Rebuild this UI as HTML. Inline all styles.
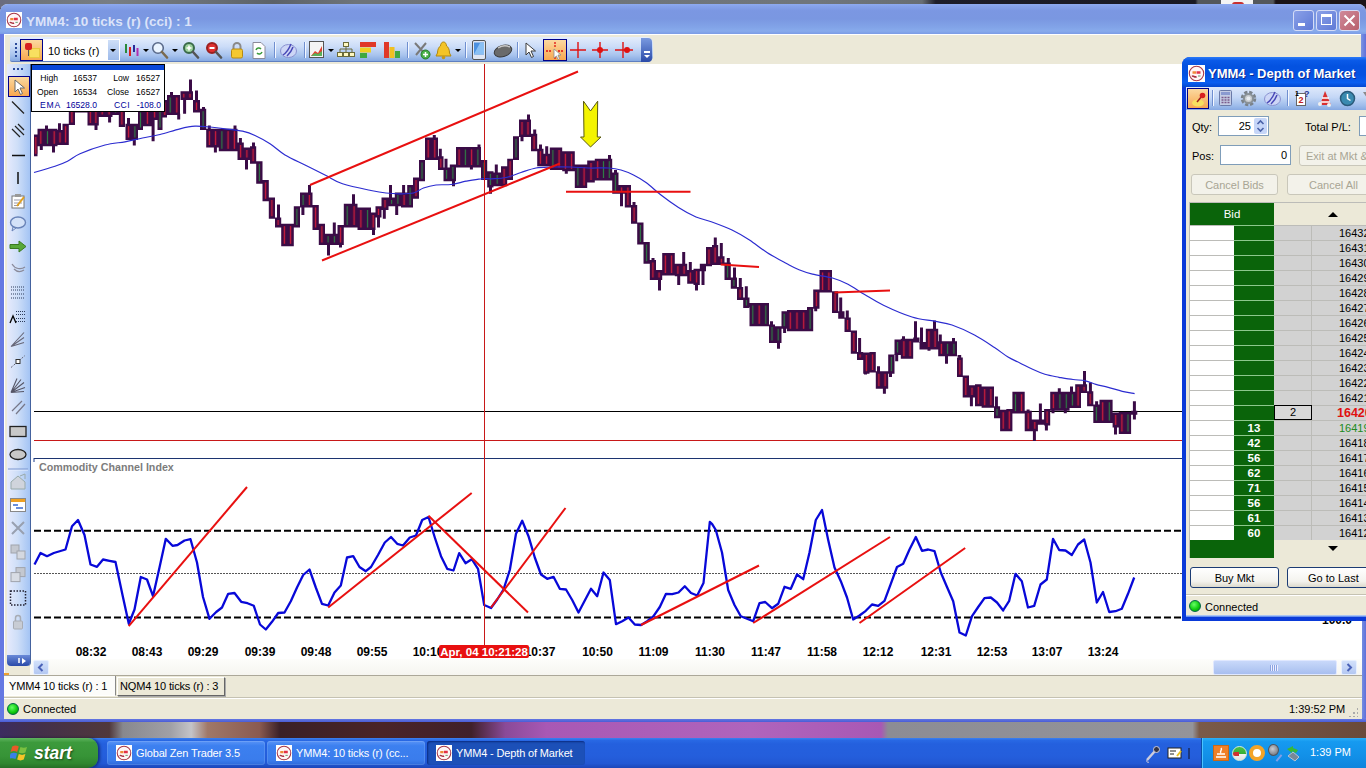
<!DOCTYPE html>
<html><head><meta charset="utf-8"><title>YMM4: 10 ticks (r) (cci) : 1</title>
<style>
*{box-sizing:border-box;margin:0;padding:0}
html,body{width:1366px;height:768px;overflow:hidden;background:#2a2230;font-family:"Liberation Sans",sans-serif;font-size:11px;color:#000}
.abs{position:absolute}
#desk-top{left:0;top:0;width:1366px;height:8px;background:linear-gradient(90deg,#6a6c80 0,#70767c 3%,#787e84 8%,#6c7278 14%,#5c6268 20%,#6e747a 26%,#70767c 60%,#686e74 67.5%,#1e1e2a 68.5%,#1a1a24 87.5%,#54585c 87.7%,#54585c 93.2%,#1a1418 93.4%,#1a1418 100%)}
#desk-bot{left:0;top:718px;width:1366px;height:22px;background:linear-gradient(90deg,#3c2c60 0,#44304a 3%,#50383c 8%,#88888e 9%,#a0a0a6 12.5%,#c4c4c8 14%,#a07868 15.2%,#8a5a50 19%,#3a2028 20.5%,#4a2428 28%,#40202a 34.5%,#8a4a98 37%,#a858b4 40%,#b064bc 55%,#a858b4 64.5%,#8c8c94 65%,#94949a 87.3%,#7a5a48 87.8%,#6a4a3a 100%)}
/* main window */
#win{left:0;top:4px;width:1366px;height:718px;background:#ece9d8;border-radius:8px 8px 0 0;overflow:hidden}
#title{left:0;top:0;width:1366px;height:30px;background:linear-gradient(180deg,#8eaaf0 0,#86a2ea 8%,#7b97e2 22%,#7a97e1 50%,#82a4e8 78%,#88abec 90%,#7c9ce6 100%)}
#title .txt{left:26px;top:10px;font:bold 13.5px "Liberation Sans",sans-serif;color:#dbe3f9;white-space:nowrap}
.wb{position:absolute;top:6px;width:21px;height:21px;border:1px solid #d5dcf6;border-radius:3px;background:linear-gradient(135deg,#8aa0e8,#5f7ad6)}
#bl{left:0;top:30px;width:4px;height:688px;background:#6578e2}
#br{left:1361px;top:30px;width:5px;height:688px;background:linear-gradient(90deg,#7b95e2,#5f70da)}
#bb{left:0;top:714px;width:1366px;height:4px;background:linear-gradient(180deg,#6c80e4,#4a5cd6)}
#tb{left:10px;top:33px;width:643px;height:25px;border-radius:2px 6px 6px 2px;background:linear-gradient(180deg,#e4edfc 0,#cbdcf8 40%,#a9c4ee 75%,#86a9e2 100%);border-bottom:1px solid #5f7fc0}
.sep{position:absolute;top:4px;width:1px;height:16px;background:#6f8fd0;box-shadow:1px 0 0 #f4f8ff}
.dd{position:absolute;top:11px;width:0;height:0;border-left:3px solid transparent;border-right:3px solid transparent;border-top:3px solid #000}
#ls{z-index:2;left:7px;top:60px;width:24px;height:602px;background:linear-gradient(90deg,#e6eafc 0,#cfdff8 45%,#a4c4f4 100%);border-right:1px solid #44629e;border-radius:0 0 4px 4px}
.sel{position:absolute;border:1px solid #00008a;background:linear-gradient(180deg,#fbd9a0,#f8a850)}
#hs{left:30px;top:654px;width:1332px;height:17px;background:linear-gradient(180deg,#fdfdfb,#f6f5f0);border-top:1px solid #fff}
#tabs{left:4px;top:671px;width:1358px;height:22px;background:#ece9d8;border-top:1px solid #aca899}
#status{left:4px;top:693px;width:1358px;height:22px;background:#ece9d8;border-top:1px solid #c5c2b2;box-shadow:inset 0 1px 0 #fff}
.dot{position:absolute;width:12px;height:12px;border-radius:50%;background:radial-gradient(circle at 40% 35%,#6f6 0,#1c1 55%,#080 100%);border:1px solid #064}
/* DOM window */
#dom{left:1182px;top:57px;width:190px;height:564px;background:#0a3ad8;border-radius:8px 0 0 0;overflow:hidden}
#dtitle{left:0;top:0;width:190px;height:30px;background:linear-gradient(180deg,#2a7af8 0,#0a5ae8 12%,#0452e0 30%,#0452e2 60%,#0a5ef0 85%,#0448d0 100%)}
#dbody{left:4px;top:30px;width:186px;height:528px;background:#ece9d8;overflow:hidden}
#dtb{left:0;top:0;width:186px;height:23px;background:linear-gradient(180deg,#dfe9fb 0,#c4d7f6 45%,#9fbdeb 80%,#86a9e2 100%)}
.inp{position:absolute;background:#fff;border:1px solid #7f9db9;font-size:11px;text-align:right}
.btn{position:absolute;border:1px solid #c9c7ba;border-radius:3px;background:#f3f2ea;color:#a8a594;text-align:center;font-size:11px;white-space:nowrap;overflow:hidden}
.btn2{position:absolute;border:1px solid #1c3c74;border-radius:3px;background:linear-gradient(180deg,#fff 0,#f4f3ee 70%,#dcd9cc 100%);color:#000;text-align:center;font-size:11px;white-space:nowrap}
/* taskbar */
#task{left:0;top:738px;width:1366px;height:30px;background:linear-gradient(180deg,#3a80f0 0,#2868e4 8%,#2460de 20%,#245edc 60%,#2258d4 85%,#1c46b8 100%)}
#start{left:0;top:0;width:98px;height:30px;border-radius:0 10px 10px 0;background:linear-gradient(180deg,#5eb45e 0,#3c9a3c 15%,#379437 60%,#2f862f 85%,#266f26 100%);box-shadow:2px 0 3px rgba(0,0,40,.5)}
#start span{position:absolute;left:34px;top:5px;font:italic bold 17.5px "Liberation Sans",sans-serif;color:#fff;text-shadow:1px 1px 2px #1a4a1a}
.tbtn{position:absolute;top:3px;height:24px;border-radius:3px;background:linear-gradient(180deg,#5a94f6 0,#3c80f0 20%,#3a7cec 80%,#2e6ada 100%);color:#fff;font-size:11px;letter-spacing:-0.15px;white-space:nowrap;overflow:hidden;box-shadow:inset 0 0 0 1px rgba(255,255,255,.12)}
.tbtn span{position:absolute;left:29px;top:6px}
.tbtn.act{background:#1c50b8;box-shadow:inset 1px 1px 2px #0a2a80}
#tray{left:1201px;top:0;width:165px;height:30px;background:linear-gradient(180deg,#2ab0f8 0,#169af0 12%,#1290e8 60%,#0f84dc 100%);border-left:1px solid #0a50a8;box-shadow:inset 1px 0 0 #4ac4ff}
.ico{position:absolute;width:16px;height:16px;border-radius:50%;background:#fff;border:1.5px solid #c83030}
</style></head><body>
<div class="abs" id="desk-top"><div class="abs" style="left:1221px;top:0;width:32px;height:5px;background:#f4f4f4"></div><div class="abs" style="left:1232px;top:2px;width:12px;height:3px;background:#c83030;border-radius:6px 6px 0 0"></div></div>
<div class="abs" id="desk-bot"></div>
<div class="abs" id="win">
 <div class="abs" id="title">
  <svg class="abs" style="left:6px;top:8px" width="16" height="16" viewBox="0 0 17 17"><rect width="17" height="17" fill="#fff"/><circle cx="8.5" cy="8.5" r="7.2" fill="#fff6f6" stroke="#a83848" stroke-width="1.1"/><path d="M4.5 7.500h3.500" stroke="#f08838" stroke-width="2.400"/><path d="M8.500 7.500h4" stroke="#e23048" stroke-width="2.600"/><path d="M4 11.500c1.500-1.500 2.500 1.500 4.500 0" stroke="#a83040" stroke-width="1.600" fill="none"/><path d="M10 11h2.500" stroke="#5a9a6a" stroke-width="1"/></svg>
  <div class="abs txt">YMM4: 10 ticks (r) (cci) : 1</div>
  <div class="wb" style="left:1293px"><div class="abs" style="left:4px;top:12px;width:7px;height:3px;background:#fff"></div></div>
  <div class="wb" style="left:1316px"><div class="abs" style="left:4px;top:3px;width:11px;height:11px;border:1px solid #fff;border-top-width:3px"></div></div>
  <div class="wb" style="left:1339px;background:linear-gradient(135deg,#d08a9a,#b8606c)"><svg class="abs" style="left:3px;top:3px" width="13" height="13"><path d="M1.5 1.5L11.5 11.5M11.5 1.5L1.5 11.5" stroke="#fff" stroke-width="2"/></svg></div>
 </div>
 <div class="abs" style="left:4px;top:30px;width:1357px;height:1px;background:#fff"></div>
 <div class="abs" style="left:4px;top:30px;width:1px;height:684px;background:#fff"></div>
 <div class="abs" id="bl"></div><div class="abs" id="br"></div><div class="abs" id="bb"></div>
 <!-- toolbar -->
 <div class="abs" id="tb"><div class="abs" style="left:0;top:1px;width:643px;height:24px">
  <div class="abs" style="left:5px;top:5px;width:2px;height:14px;background:repeating-linear-gradient(180deg,#2a4a9a 0,#2a4a9a 2px,transparent 2px,transparent 4px)"></div>
  <div class="sel" style="left:10px;top:1px;width:23px;height:22px"><div class="abs" style="left:8px;top:8px;width:11px;height:10px;background:#f8e060;border:1px solid #e8c840"></div><div class="abs" style="left:4px;top:3px;width:7px;height:7px;background:#d82020;border-radius:2px"></div><div class="abs" style="left:7px;top:10px;width:1px;height:6px;background:#555"></div></div>
  <div class="abs" style="left:33px;top:1px;width:77px;height:22px;background:#fff"></div>
  <div class="abs" style="left:38px;top:7px;font-size:11px;white-space:nowrap">10 ticks (r)</div>
  <div class="abs" style="left:98px;top:2px;width:11px;height:20px;background:linear-gradient(180deg,#cfdff8,#9dbaea)"></div><div class="dd" style="left:100px"></div>
  <!-- candle icon -->
  <svg class="abs" style="left:114px;top:4px" width="16" height="16"><path d="M2 2v9" stroke="#2a8a3a" stroke-width="2"/><path d="M6 5v9" stroke="#d82020" stroke-width="2"/><path d="M10 3v7" stroke="#2a2a9a" stroke-width="2"/><path d="M13.5 6v8" stroke="#b030b0" stroke-width="2"/></svg><div class="dd" style="left:133px"></div>
  <svg class="abs" style="left:141px;top:3px" width="18" height="18"><circle cx="7" cy="7" r="5.3" fill="#eaf4ff" stroke="#5a6a8a" stroke-width="1.6"/><path d="M11 11l5 5.5" stroke="#7a6a50" stroke-width="2.6" stroke-linecap="round"/></svg><div class="dd" style="left:162px"></div>
  <svg class="abs" style="left:172px;top:3px" width="18" height="18"><circle cx="7" cy="7" r="5" fill="#9ad09a" stroke="#3a6a4a" stroke-width="2"/><path d="M4.5 7h5M7 4.5v5" stroke="#fff" stroke-width="1.6"/><path d="M11 11l5 5.5" stroke="#555" stroke-width="2.6" stroke-linecap="round"/></svg>
  <svg class="abs" style="left:195px;top:3px" width="18" height="18"><circle cx="7" cy="7" r="5" fill="#e03030" stroke="#9a2020" stroke-width="2"/><path d="M4.5 7h5" stroke="#fff" stroke-width="1.8"/><path d="M11 11l5 5.5" stroke="#555" stroke-width="2.6" stroke-linecap="round"/></svg>
  <svg class="abs" style="left:220px;top:3px" width="14" height="19"><path d="M3.5 8V5.5a3.5 3.5 0 017 0V8" fill="none" stroke="#8a8a8a" stroke-width="2"/><rect x="1.5" y="8" width="11" height="9" rx="1.5" fill="#f4c830" stroke="#b88a10"/></svg>
  <svg class="abs" style="left:242px;top:4px" width="14" height="17"><path d="M1 .5h8l4 4v12H1z" fill="#fff" stroke="#8a8a9a"/><path d="M4 8a3 3 0 015-1M10 10a3 3 0 01-5 1" fill="none" stroke="#3a9a3a" stroke-width="1.5"/></svg>
  <div class="sep" style="left:264px"></div>
  <svg class="abs" style="left:269px;top:3px" width="19" height="19"><ellipse cx="9.5" cy="10" rx="8" ry="6.5" fill="#cdd6f6" stroke="#8a92d0"/><path d="M4 14c3-2 6-6 8-11M8 15c3-3 5-6 6-9" fill="none" stroke="#4a4ab8" stroke-width="1.5"/></svg>
  <div class="sep" style="left:294px"></div>
  <svg class="abs" style="left:299px;top:3px" width="16" height="18"><rect x=".5" y=".5" width="14" height="16" fill="#f4f4f4" stroke="#555"/><path d="M2 15l4-5 3 2 4-7v10z" fill="#e04030"/><path d="M2 15l4-3 3 1 4-3v5z" fill="#58b058"/></svg><div class="dd" style="left:318px"></div>
  <svg class="abs" style="left:327px;top:4px" width="18" height="16"><path d="M9 4v3M3 10V7h12v3M9 7v3" fill="none" stroke="#6a6a3a"/><rect x="6.5" y=".5" width="5" height="4" fill="#fff8c0" stroke="#6a6a3a"/><rect x=".5" y="10.500" width="5" height="4" fill="#fff8c0" stroke="#6a6a3a"/><rect x="6.5" y="10.500" width="5" height="4" fill="#fff8c0" stroke="#6a6a3a"/><rect x="12.5" y="10.500" width="5" height="4" fill="#fff8c0" stroke="#6a6a3a"/></svg>
  <svg class="abs" style="left:350px;top:4px" width="17" height="17"><rect x="0" y="0" width="16" height="5" fill="#e03828"/><rect x="0" y="5.500" width="11" height="5" fill="#f0d020"/><rect x="0" y="11" width="7" height="5" fill="#40a840"/></svg>
  <svg class="abs" style="left:374px;top:3px" width="17" height="18"><rect x="0" y="1" width="5" height="16" fill="#e03828"/><rect x="5.500" y="6" width="5" height="11" fill="#f0c020"/><rect x="11" y="10" width="5" height="7" fill="#40a840"/></svg>
  <div class="sep" style="left:397px"></div>
  <svg class="abs" style="left:403px;top:3px" width="18" height="19"><path d="M2 2l11 12M13 2L3 14" stroke="#7a7a7a" stroke-width="2"/><circle cx="12.5" cy="13.500" r="4.500" fill="#48b048" stroke="#2a7a2a"/><path d="M10 13.500h5M12.500 11v5" stroke="#fff" stroke-width="1.500"/></svg>
  <svg class="abs" style="left:425px;top:3px" width="17" height="19"><path d="M8.500 1c2 0 3 2 3 4 2 1 3 4 3 7l1.500 3H1l1.500-3c0-3 1-6 3-7 0-2 1-4 3-4z" fill="#f4c428" stroke="#b08810"/><circle cx="8.500" cy="16.500" r="1.800" fill="#c89818"/></svg><div class="dd" style="left:445px"></div>
  <div class="sep" style="left:455px"></div>
  <svg class="abs" style="left:462px;top:2px" width="14" height="20"><rect x=".5" y=".5" width="13" height="19" rx="1.500" fill="#dfe6f4" stroke="#555"/><rect x="2" y="2.500" width="10" height="12" fill="#4a90e0"/><path d="M2 14l6-11h4v11z" fill="#8ac0f4"/></svg>
  <svg class="abs" style="left:483px;top:5px" width="20" height="15"><ellipse cx="10" cy="8" rx="9" ry="5.500" transform="rotate(-18 10 8)" fill="#6a6a6a" stroke="#3a3a3a"/><path d="M5 5c3-2 8-3 12-1" stroke="#c8c8c8" stroke-width="1.500" fill="none"/></svg>
  <div class="sep" style="left:507px"></div>
  <svg class="abs" style="left:515px;top:4px" width="12" height="17"><path d="M1 1v12l3-3 2.500 5.500 2-1L6 9h4.500z" fill="#fff" stroke="#3a3a3a"/></svg>
  <div class="sel" style="left:533px;top:1px;width:24px;height:22px"><svg class="abs" style="left:2px;top:2px" width="18" height="18"><path d="M9 0v6M9 12v6M0 9h6M12 9h6" stroke="#e01010" stroke-width="1.300" stroke-dasharray="2 1"/><path d="M8 7v9l2.500-2 1.500 3.500 1.500-.7L12 13h3z" fill="#fff" stroke="#8a8a8a" stroke-width=".8"/></svg></div>
  <svg class="abs" style="left:560px;top:4px" width="16" height="16"><path d="M8 0v16M0 8h16" stroke="#e01010" stroke-width="1.400"/></svg>
  <svg class="abs" style="left:582px;top:4px" width="16" height="16"><path d="M8 0v16M0 8h16" stroke="#e01010" stroke-width="1.400"/><circle cx="8" cy="8" r="3" fill="#e01010"/></svg>
  <svg class="abs" style="left:605px;top:4px" width="18" height="16"><path d="M8 0v16M0 8h18" stroke="#e01010" stroke-width="1.400"/><circle cx="12" cy="8" r="3" fill="#e01010"/></svg>
  <div class="abs" style="left:631px;top:0;width:11px;height:24px;border-radius:0 4px 4px 0;background:linear-gradient(180deg,#7a9ae0,#2a4aa8)"></div>
  <div class="abs" style="left:634px;top:13px;width:6px;height:2px;background:#fff"></div><div class="dd" style="left:634px;top:17px;border-top-color:#fff"></div>
 </div></div>
 <!-- left strip -->
 <div class="abs" id="ls">
  <div class="abs" style="left:6px;top:4px;width:10px;height:2px;background:repeating-linear-gradient(90deg,#2a4a9a 0,#2a4a9a 2px,transparent 2px,transparent 4px)"></div>
  <div class="sel" style="left:1px;top:12px;width:22px;height:21px"><svg class="abs" style="left:5px;top:2px" width="12" height="17"><path d="M1 1v12l3-3 2.500 5.500 2-1L6 9h4.500z" fill="#fff" stroke="#6a6a6a"/></svg></div>
  <svg class="abs" style="left:1px;top:36px" width="20" height="560" viewBox="0 0 20 560">
   <g transform="translate(10 7.5)"><path d="M-6 -6l12 12" stroke="#222" stroke-width="1.2"/></g>
   <g transform="translate(10 31)"><path d="M-6 -2l8 8M-3 -5l9 9M0 -7l6 6" stroke="#222" stroke-width="1.2"/></g>
   <g transform="translate(10 55.5)"><path d="M-6 0h13" stroke="#111" stroke-width="1.5"/></g>
   <g transform="translate(10 78)"><path d="M0 -6v12" stroke="#111" stroke-width="1.5"/></g>
   <g transform="translate(10 101)"><rect x="-6" y="-5" width="12" height="12" fill="#fff" stroke="#777"/><path d="M-4 -1h8M-4 2h8M-4 4.500h5" stroke="#99a"/><path d="M-1 5l7-9" stroke="#e0a020" stroke-width="2"/><rect x="-3" y="-7" width="6" height="3" fill="#999"/></g>
   <g transform="translate(10 123.5)"><ellipse cx="0" cy="-1" rx="7.500" ry="5.500" fill="#d4e2f8" stroke="#6a84b8" stroke-width="1.400"/><path d="M-5 3.500l-1 4 4-3z" fill="#d4e2f8" stroke="#6a84b8"/></g>
   <g transform="translate(10 146.5)"><path d="M-8 -2h9v-3.500l7 5.500-7 5.500V2h-9z" fill="#58a838" stroke="#3a7a20"/></g>
   <g transform="translate(10 168)"><path d="M-6 -4c3 5 9 6 13 3M-4 1c3 3 7 3 10 1" fill="none" stroke="#8a8a9a" stroke-width="1.200"/></g>
   <g transform="translate(10 192.5)"><path d="M-7 -5.500h13M-7 -2.500h13M-7 1.500h13M-7 5.500h13" stroke="#2c3c5c" stroke-dasharray="1 1"/></g>
   <g transform="translate(10 217)"><path d="M-2 -5.500h9M-2 -2.500h9M-2 1.500h9M-2 4.500h9" stroke="#2c3c5c" stroke-dasharray="1 1"/><path d="M-8 6l3-7 3 7" fill="none" stroke="#000" stroke-width="1.300"/></g>
   <g transform="translate(10 239.5)"><path d="M-7 7L6 -7M-7 7l13-9M-7 7l13-4" stroke="#667" stroke-width="1.100"/></g>
   <g transform="translate(10 261.5)"><path d="M-7 6l14-12" stroke="#667" stroke-dasharray="2 1.500"/><rect x="-2" y="-2" width="4" height="4" fill="#fff" stroke="#333"/></g>
   <g transform="translate(10 285.5)"><path d="M-7 7l6-14M-7 7l10-13M-7 7l13-10M-7 7l14-5M-7 7l13-1" stroke="#556" stroke-width="1.100"/></g>
   <g transform="translate(10 308)"><path d="M-6 3l10-10M-2 6l9-10" stroke="#778" stroke-width="1.200"/></g>
   <g transform="translate(10 331.5)"><rect x="-8" y="-5" width="16" height="10" fill="#c8c8c8" stroke="#222" stroke-width="1.300"/></g>
   <g transform="translate(10 354.5)"><ellipse cx="0" cy="0" rx="8" ry="5" fill="#c8c8c8" stroke="#222" stroke-width="1.300"/></g>
   <g transform="translate(10 370)"><path d="M-10 0h20" stroke="#e8f0ff"/><path d="M-10 -1h20" stroke="#7a96d0"/></g>
   <g transform="translate(10 382)"><path d="M-7 0l7-6 7 6v7h-14z" fill="#d0d4dc" stroke="#9aa"/><path d="M2 -6l5-2v5" fill="none" stroke="#9aa"/></g>
   <g transform="translate(10 405)"><rect x="-7.500" y="-6.500" width="15" height="13" fill="#fff" stroke="#888"/><rect x="-7" y="-6" width="14" height="3" fill="#f0a020"/><path d="M-5 0h5M-2 3h7" stroke="#3a6ad0" stroke-width="1.500"/></g>
   <g transform="translate(10 428)"><path d="M-6 -6l12 12M6 -6l-12 12" stroke="#98a0b0" stroke-width="2"/></g>
   <g transform="translate(10 452)"><rect x="-7" y="-7" width="8" height="8" fill="#c4c8d0" stroke="#a0a4ac"/><rect x="-1" y="-1" width="8" height="8" fill="#d4d8e0" stroke="#a0a4ac"/></g>
   <g transform="translate(10 474.6)"><rect x="-2" y="-7" width="9" height="9" fill="#c4c8d0" stroke="#a0a4ac"/><rect x="-7" y="-2" width="9" height="9" fill="#d8dce4" stroke="#a0a4ac"/></g>
   <g transform="translate(10 498)"><rect x="-7.500" y="-7" width="15" height="14" fill="none" stroke="#223" stroke-width="1.500" stroke-dasharray="1.500 1.500"/></g>
   <g transform="translate(10 522)"><rect x="-4.500" y="-1" width="9" height="8" rx="1" fill="#c8ccd4" stroke="#a8acb4"/><path d="M-2.500 -1v-3a2.500 2.500 0 015 0v3" fill="none" stroke="#a8acb4" stroke-width="1.500"/></g>
  </svg>
  <div class="abs" style="left:0;top:591px;width:23px;height:11px;border-radius:0 0 4px 4px;background:linear-gradient(180deg,#6a8ad8,#2a4aa8)"></div>
  <svg class="abs" style="left:11px;top:593px" width="10" height="8"><path d="M1 1v5" stroke="#fff" stroke-width="1.500"/><path d="M4 1l4 3-4 3z" fill="#fff"/></svg>
 </div>
 <!-- h scrollbar -->
 <div class="abs" id="hs">
  <div class="abs" style="left:3px;top:1px;width:16px;height:15px;border-radius:2px;background:linear-gradient(180deg,#d2e0fa,#b4c8f2);border:1px solid #e8f0ff"><svg width="14" height="13"><path d="M8.500 3L5 6.500 8.500 10" fill="none" stroke="#4a62b8" stroke-width="2"/></svg></div>
  <div class="abs" style="left:1183px;top:1px;width:124px;height:15px;border-radius:2px;background:linear-gradient(180deg,#c8d8fa,#b8ccf4 50%,#a8bef0);border:1px solid #e0e8ff"><div class="abs" style="left:56px;top:4px;width:8px;height:6px;background:repeating-linear-gradient(90deg,#8aa4e0 0,#8aa4e0 1px,#eef 1px,#eef 2px)"></div></div>
  <div class="abs" style="left:1311px;top:1px;width:16px;height:15px;border-radius:2px;background:linear-gradient(180deg,#d2e0fa,#b4c8f2);border:1px solid #e8f0ff"><svg width="14" height="13"><path d="M5.500 3L9 6.500 5.500 10" fill="none" stroke="#4a62b8" stroke-width="2"/></svg></div>
 </div>
 <!-- tabs -->
 <div class="abs" id="tabs">
  <div class="abs" style="left:0;top:-3px;width:5px;height:2px;background:#f0a030"></div>
  <div class="abs" style="left:0;top:0;width:112px;height:20px;background:#fcfcfa;border-right:1px solid #888;border-bottom:1px solid #fff"></div>
  <div class="abs" style="left:5px;top:4px;font-size:11px;letter-spacing:-0.15px;white-space:nowrap">YMM4 10 ticks (r) : 1</div>
  <div class="abs" style="left:113px;top:1px;width:108px;height:19px;background:#ece9d8;border:1px solid #fff;border-right-color:#666;border-bottom-color:#666;box-shadow:1px 1px 0 #aaa"></div>
  <div class="abs" style="left:116px;top:4px;font-size:11px;letter-spacing:-0.15px;white-space:nowrap">NQM4 10 ticks (r) : 3</div>
 </div>
 <div class="abs" id="status">
  <div class="dot" style="left:3px;top:5px"></div>
  <div class="abs" style="left:19px;top:5px;font-size:11px">Connected</div>
  <div class="abs" style="left:1285px;top:5px;font-size:11px;white-space:nowrap">1:39:52 PM</div>
  <div class="abs" style="left:1344px;top:9px;width:10px;height:10px;background:radial-gradient(circle,#aaa 1px,transparent 1.200px) 0 0/4px 4px;clip-path:polygon(100% 0,100% 100%,0 100%)"></div>
 </div>
</div>
<svg class="abs" style="left:30px;top:64px" width="1332" height="594" viewBox="30 64 1332 594">
<rect x="30" y="64" width="1332" height="594" fill="#fff"/>
<path d="M34 411.5H1362" stroke="#000" stroke-width="1"/>
<path d="M34 440.5H1362" stroke="#c81818" stroke-width="1"/>
<path d="M34 458.5H1362" stroke="#1c3470" stroke-width="1"/>
<path d="M34 458V462" stroke="#1a3a8a" stroke-width="1"/>
<path d="M34 134.5H37.5V156.2H34ZM37.5 128.8H57.5V146.2H37.5ZM57.5 130H62.5V145H57.5ZM62.5 123.8H68.8V145H62.5ZM68.8 107.5H75V125H68.8ZM75 100H87.5V112.5H75ZM87.5 107.5H98.8V125.5H87.5ZM98.8 102.5H112.5V117H98.8ZM112.5 100H118.8V115H112.5ZM118.8 107.5H125V127H118.8ZM125.5 123.8H138V140H125.5ZM138 110H143V130H138ZM143 107.5H151.8V126.2H143ZM151.8 105H157.5V120H151.8ZM157.5 107.5H162.5V130H157.5ZM162.5 100H167V117.5H162.5ZM167 95H180V115H167ZM180.5 91.2H187V100H180.5ZM187 91.2H193V100H187ZM193 100H200V112.5H193ZM200 108.8H206.2V130H200ZM206.2 128.8H218.8V147.5H206.2ZM218.8 128.8H237.5V151.2H218.8ZM237.5 142.5H243.8V160H237.5ZM243.8 147.5H250V160H243.8ZM250 146.2H256.2V163.8H250ZM256.2 161.2H262.5V183.8H256.2ZM262.5 180H268.8V201.2H262.5ZM268.8 197.5H275V218.8H268.8ZM275 217.5H281.2V227.5H275ZM281.2 223.8H293.8V246.2H281.2ZM293.8 206.2H300V227.5H293.8ZM300 192.5H312.5V207.5H300ZM312.5 205H318.8V230H312.5ZM318.8 223.8H325V245H318.8ZM325 233.8H337.5V245H325ZM337.5 225H343.8V245H337.5ZM343.8 203.8H357.5V227.5H343.8ZM357.5 207.5H371V230H357.5ZM371 212.5H375.5V230H371ZM375.5 206.2H381.5V217.5H375.5ZM381.5 197.5H388.5V210H381.5ZM388.5 197.5H394.8V206.2H388.5ZM394.8 192.5H401V206.2H394.8ZM401 192.5H407.2V207.5H401ZM407.2 185H413V207.5H407.2ZM413 177.5H419V198.8H413ZM419 160H425V181.2H419ZM425 137.5H438V160H425ZM438 156.2H443.5V170H438ZM443.5 167.5H449.8V181.2H443.5ZM449.8 164.5H456V181.2H449.8ZM456 147H481V167.5H456ZM481 160H487.2V180H481ZM487.2 171.2H493.5V187.5H487.2ZM493.5 172.5H501V186.2H493.5ZM501 166.2H507.2V186.2H501ZM507.2 158.8H513V180H507.2ZM513 136.2H519V160H513ZM519 119.5H531V137H519ZM531 133.8H537.2V151.2H531ZM537.2 148.8H543.5V166.2H537.2ZM543.5 153.8H549.8V166.2H543.5ZM549.8 147.5H562.2V170H549.8ZM562.2 151.2H574.8V171.2H562.2ZM574.8 164.5H587.2V188H574.8ZM587.2 160.5H594.8V182.5H587.2ZM594.8 158.8H612.2V180.5H594.8ZM612.2 172.5H618.5V193.8H612.2ZM618.5 185H624.8V193.8H618.5ZM624.8 185H631V207.5H624.8ZM631 205H637.2V223.8H631ZM637.2 222.5H643.5V244.5H637.2ZM643.5 242H649.8V263.8H643.5ZM649.8 260H656V280H649.8ZM656 270H662.2V280H656ZM662.2 253H674.8V275.5H662.2ZM674.8 263.8H687.2V276.2H674.8ZM687.2 270H693.5V283.8H687.2ZM693.5 268.8H699.8V285H693.5ZM699.8 263.8H706V271.2H699.8ZM706 247H712V266.2H706ZM712 245H718.2V265H712ZM718.2 256.2H724.5V265H718.2ZM724.5 262.5H730.8V280H724.5ZM730.8 277.5H737V288.8H730.8ZM737 287H743.2V300H737ZM743.2 297.5H749.5V308H743.2ZM749.5 303H769V326.2H749.5ZM769 324.5H775V343H769ZM775 326.2H781.5V343H775ZM781.5 311.2H787V328.8H781.5ZM787 310H807V331.2H787ZM807 307H813.2V331.2H807ZM813.2 289.5H819.5V308.8H813.2ZM819.5 270H832V292.5H819.5ZM832 291.2H838.2V313H832ZM838.2 311.2H844.5V318.8H838.2ZM844.5 317.5H850.8V332H844.5ZM850.8 330.5H857V353.8H850.8ZM857 352H863.2V360H857ZM863.2 352.5H869.5V373.8H863.2ZM869.5 352H875.8V372.5H869.5ZM875.8 371.2H888.2V388.8H875.8ZM888.2 354.5H894.5V373.8H888.2ZM894.5 339.5H900.8V355H894.5ZM900.8 338.8H913.2V358.8H900.8ZM913.2 337.5H919.5V342.5H913.2ZM919.5 342H925.8V349.5H919.5ZM925.8 328.8H938.2V349.5H925.8ZM938.2 341.2H957V356.2H938.2ZM957 357.5H962.8V377H957ZM962.7 375.5H969V397.5H962.7ZM969 385.2H975V397.5H969ZM975 384.3H981.6V406.3H975ZM981.6 386.6H994V407.7H981.6ZM994 406.3H1000.1V418.2H994ZM1000.1 409.8H1006.3V431.2H1000.1ZM1006.3 408.9H1012.4V431.2H1006.3ZM1012.4 391.8H1024.7V413.6H1012.4ZM1024.7 410.7H1031.8V431.2H1024.7ZM1031.8 419.5H1037.9V431.2H1031.8ZM1037.9 419.5H1044.1V424.7H1037.9ZM1044.1 408.9H1050.2V425.6H1044.1ZM1050.2 391.8H1069.6V410.7H1050.2ZM1069.6 391.8H1075.2V408H1069.6ZM1075.2 384.3H1081V408H1075.2ZM1081 384.3H1087.1V393.1H1081ZM1087.1 391.3H1093.3V406.3H1087.1ZM1093.3 404.5H1099.5V423H1093.3ZM1099.5 399.8H1112.6V423H1099.5ZM1112.6 412.4H1118.8V427.4H1112.6ZM1118.8 411.9H1131.1V434H1118.8ZM1131.1 410.7H1137.3V414.7H1131.1ZM39.8 146.2H42.8V150H39.8ZM45 125.5H48V128.8H45ZM52 146.2H55V152.5H52ZM58 123.2H61V130H58ZM94.5 125.5H97.5V130H94.5ZM108.1 117H111.1V122.5H108.1ZM127 118H130V123.8H127ZM132.8 140H135.8V145.5H132.8ZM151.6 120H154.6V141.2H151.6ZM170 92H173V95H170ZM177.2 113.8H180.2V119.5H177.2ZM183.1 100H186.1V113.8H183.1ZM189 79.5H192V91.2H189ZM195 90.5H198V100H195ZM202 107H205V108.8H202ZM207.8 125.5H210.8V128.8H207.8ZM213.9 147.5H216.9V152.5H213.9ZM233.5 125.5H236.5V128.8H233.5ZM238.9 138H241.9V142.5H238.9ZM245 160H248V169.5H245ZM252 142.5H255V146.2H252ZM277 204.5H280V217.5H277ZM301.4 207.5H304.4V215H301.4ZM308 185H311V192.5H308ZM327 245H330V255.5H327ZM332.8 222.5H335.8V233.8H332.8ZM339 245H342V247.5H339ZM352 194.2H355V203.8H352ZM372 230H375V235H372ZM377 217.5H380V227.5H377ZM382.8 210H385.8V218.8H382.8ZM389 185H392V197.5H389ZM395.2 206.2H398.2V215H395.2ZM402.1 185H405.1V192.5H402.1ZM432.8 135H435.8V137.5H432.8ZM438.8 148.8H441.8V156.2H438.8ZM444.5 158.8H447.5V167.5H444.5ZM452 181.2H455V186.2H452ZM477.5 144.5H480.5V147H477.5ZM469.9 167.5H472.9V169.5H469.9ZM489 187.5H492V193.8H489ZM494.8 164.5H497.8V172.5H494.8ZM527 114.5H530V119.5H527ZM520.5 137H523.5V141.2H520.5ZM533.2 129.5H536.2V133.8H533.2ZM539 144.5H542V148.8H539ZM545.2 146.2H548.2V153.8H545.2ZM564.8 171.2H567.8V173.8H564.8ZM608 155H611V158.8H608ZM614 170H617V172.5H614ZM620 193.8H623V206.2H620ZM632.5 202H635.5V205H632.5ZM651.5 258H654.5V260H651.5ZM658 280H661V290.5H658ZM682.2 252H685.2V263.8H682.2ZM677.2 276.2H680.2V285H677.2ZM688.8 262H691.8V270H688.8ZM695 285H698V290.5H695ZM701.5 271.2H704.5V285H701.5ZM713.8 237.5H716.8V245H713.8ZM719.8 243H722.8V256.2H719.8ZM726.8 258H729.8V262.5H726.8ZM733 267.5H736V277.5H733ZM738.8 278H741.8V287H738.8ZM744.8 286.2H747.8V297.5H744.8ZM770 321.2H773V324.5H770ZM777 343H780V348.8H777ZM783.1 328.8H786.1V333H783.1ZM814.2 308.8H817.2V311.2H814.2ZM839.2 297.5H842.2V311.2H839.2ZM845.8 310.5H848.8V317.5H845.8ZM858.1 338H861.1V352H858.1ZM864 360H867V374.5H864ZM877 366.2H880V371.2H877ZM882.9 388.8H885.9V393.8H882.9ZM889 373.8H892V377H889ZM895.2 355H898.2V361.2H895.2ZM902 336.2H905V338.8H902ZM914 321.2H917V337.5H914ZM920 327.5H923V342H920ZM927.5 349.5H930.5V350.8H927.5ZM933 320.5H936V328.8H933ZM938.8 334.5H941.8V341.2H938.8ZM952 338H955V341.2H952ZM945 356.2H948V363.8H945ZM958.2 355H961.2V357.5H958.2ZM957.6 354.9H960.6V357H957.6ZM969.9 397.5H972.9V406.3H969.9ZM994.9 396.6H997.9V406.3H994.9ZM1026.6 409.4H1029.6V410.7H1026.6ZM1032.9 431.2H1035.9V441.1H1032.9ZM1038.9 403.6H1041.9V419.5H1038.9ZM1044.9 425.6H1047.9V430.5H1044.9ZM1057.8 388.3H1060.8V391.8H1057.8ZM1070 386.6H1073V391.8H1070ZM1051.5 410.7H1054.5V413.3H1051.5ZM1063.8 410.7H1066.8V413.3H1063.8ZM1083 371.1H1086V384.3H1083ZM1088.9 382.5H1091.9V391.3H1088.9ZM1095.1 401.3H1098.1V404.5H1095.1ZM1114 427.4H1117V434.4H1114ZM1132.9 401.3H1135.9V410.7H1132.9ZM1132.9 414.7H1135.9V419.5H1132.9Z" fill="#3a0b46"/>
<path d="M35.8 137V153.8M40.8 131.2V143.8M54.2 131.2V143.8M60 132.5V142.5M65.6 126.2V142.5M71.9 110V122.5M78.1 102.5V110M84.4 102.5V110M90.3 110V123M95.9 110V123M102.2 105V114.5M109.1 105V114.5M121.9 110V124.5M128.6 126.2V137.5M147.4 110V123.8M154.6 107.5V117.5M164.8 102.5V115M176.8 97.5V112.5M183.8 93.8V97.5M190 93.8V97.5M196.5 102.5V110M209.4 131.2V145M215.6 131.2V145M228.1 131.2V148.8M234.4 131.2V148.8M240.6 145V157.5M246.9 150V157.5M253.1 148.8V161.2M265.6 182.5V198.8M271.9 200V216.2M278.1 220V225M284.4 226.2V243.8M290.6 226.2V243.8M309.4 195V205M315.6 207.5V227.5M321.9 226.2V242.5M340.6 227.5V242.5M354.1 206.2V225M360.9 210V227.5M373.2 215V227.5M378.5 208.8V215M385 200V207.5M404.1 195V205M416 180V196.2M428.2 140V157.5M434.8 140V157.5M440.8 158.8V167.5M459.1 149.5V165M471.6 149.5V165M504.1 168.8V183.8M510.1 161.2V177.5M522 122V134.5M528 122V134.5M534.1 136.2V148.8M540.4 151.2V163.8M546.6 156.2V163.8M559.1 150V167.5M565.4 153.8V168.8M571.6 153.8V168.8M584.1 167V185.5M591 163V180M597.7 161.2V178M621.6 187.5V191.2M627.9 187.5V205M634.1 207.5V221.2M652.9 262.5V277.5M659.1 272.5V277.5M665.4 255.5V273M671.6 255.5V273M677.9 266.2V273.8M684.1 266.2V273.8M690.4 272.5V281.2M696.6 271.2V282.5M709 249.5V263.8M715.1 247.5V262.5M721.4 258.8V262.5M740.1 289.5V297.5M759.2 305.5V323.8M790.3 312.5V328.8M797 312.5V328.8M803.7 312.5V328.8M816.4 292V306.2M822.6 272.5V290M828.9 272.5V290M835.1 293.8V310.5M847.6 320V329.5M853.9 333V351.2M860.1 354.5V357.5M866.4 355V371.2M872.6 354.5V370M878.9 373.8V386.2M885.1 373.8V386.2M903.9 341.2V356.2M910.1 341.2V356.2M928.9 331.2V347M935.1 331.2V347M941.4 343.8V353.8M959.9 360V374.5M965.8 378V395M972 387.7V395M978.3 386.8V403.8M984.7 389.1V405.2M990.9 389.1V405.2M1003.2 412.3V428.7M1009.3 411.4V428.7M1021.6 394.3V411.1M1028.2 413.2V428.7M1034.8 422V428.7M1047.1 411.4V423.1M1053.4 394.3V408.2M1078.1 386.8V405.5M1084.1 386.8V390.6M1090.2 393.8V403.8M1102.7 402.3V420.5M1115.7 414.9V424.9M1121.9 414.4V431.5" stroke="#55103f" stroke-width="3" fill="none"/>
<path d="M47.5 131.2V143.8M115.6 102.5V112.5M134.9 126.2V137.5M140.5 112.5V127.5M160 110V127.5M170.2 97.5V112.5M203.1 111.2V127.5M221.9 131.2V148.8M259.4 163.8V181.2M296.9 208.8V225M303.1 195V205M328.1 236.2V242.5M334.4 236.2V242.5M347.2 206.2V225M367.6 210V227.5M391.6 200V203.8M397.9 195V203.8M410.1 187.5V205M422 162.5V178.8M446.6 170V178.8M452.9 167V178.8M465.4 149.5V165M477.9 149.5V165M484.1 162.5V177.5M490.4 173.8V185M497.2 175V183.8M516 138.8V157.5M552.9 150V167.5M577.9 167V185.5M603.5 161.2V178M609.3 161.2V178M615.4 175V191.2M640.4 225V242M646.6 244.5V261.2M727.6 265V277.5M733.9 280V286.2M746.4 300V305.5M752.8 305.5V323.8M765.8 305.5V323.8M772 327V340.5M778.2 328.8V340.5M784.2 313.8V326.2M810.1 309.5V328.8M891.4 357V371.2M897.6 342V352.5M947.6 343.8V353.8M953.9 343.8V353.8M997 408.8V415.7M1015.5 394.3V411.1M1059.9 394.3V408.2M1066.3 394.3V408.2M1072.4 394.3V405.5M1096.4 407V420.5M1109.3 402.3V420.5M1128 414.4V431.5" stroke="#3a1a40" stroke-width="3" fill="none"/>
<path d="M35.8 137V153.8M40.8 131.2V143.8M54.2 131.2V143.8M60 132.5V142.5M65.6 126.2V142.5M71.9 110V122.5M78.1 102.5V110M84.4 102.5V110M90.3 110V123M95.9 110V123M102.2 105V114.5M109.1 105V114.5M121.9 110V124.5M128.6 126.2V137.5M147.4 110V123.8M154.6 107.5V117.5M164.8 102.5V115M176.8 97.5V112.5M183.8 93.8V97.5M190 93.8V97.5M196.5 102.5V110M209.4 131.2V145M215.6 131.2V145M228.1 131.2V148.8M234.4 131.2V148.8M240.6 145V157.5M246.9 150V157.5M253.1 148.8V161.2M265.6 182.5V198.8M271.9 200V216.2M278.1 220V225M284.4 226.2V243.8M290.6 226.2V243.8M309.4 195V205M315.6 207.5V227.5M321.9 226.2V242.5M340.6 227.5V242.5M354.1 206.2V225M360.9 210V227.5M373.2 215V227.5M378.5 208.8V215M385 200V207.5M404.1 195V205M416 180V196.2M428.2 140V157.5M434.8 140V157.5M440.8 158.8V167.5M459.1 149.5V165M471.6 149.5V165M504.1 168.8V183.8M510.1 161.2V177.5M522 122V134.5M528 122V134.5M534.1 136.2V148.8M540.4 151.2V163.8M546.6 156.2V163.8M559.1 150V167.5M565.4 153.8V168.8M571.6 153.8V168.8M584.1 167V185.5M591 163V180M597.7 161.2V178M621.6 187.5V191.2M627.9 187.5V205M634.1 207.5V221.2M652.9 262.5V277.5M659.1 272.5V277.5M665.4 255.5V273M671.6 255.5V273M677.9 266.2V273.8M684.1 266.2V273.8M690.4 272.5V281.2M696.6 271.2V282.5M709 249.5V263.8M715.1 247.5V262.5M721.4 258.8V262.5M740.1 289.5V297.5M759.2 305.5V323.8M790.3 312.5V328.8M797 312.5V328.8M803.7 312.5V328.8M816.4 292V306.2M822.6 272.5V290M828.9 272.5V290M835.1 293.8V310.5M847.6 320V329.5M853.9 333V351.2M860.1 354.5V357.5M866.4 355V371.2M872.6 354.5V370M878.9 373.8V386.2M885.1 373.8V386.2M903.9 341.2V356.2M910.1 341.2V356.2M928.9 331.2V347M935.1 331.2V347M941.4 343.8V353.8M959.9 360V374.5M965.8 378V395M972 387.7V395M978.3 386.8V403.8M984.7 389.1V405.2M990.9 389.1V405.2M1003.2 412.3V428.7M1009.3 411.4V428.7M1021.6 394.3V411.1M1028.2 413.2V428.7M1034.8 422V428.7M1047.1 411.4V423.1M1053.4 394.3V408.2M1078.1 386.8V405.5M1084.1 386.8V390.6M1090.2 393.8V403.8M1102.7 402.3V420.5M1115.7 414.9V424.9M1121.9 414.4V431.5" stroke="#cc1c3e" stroke-width="1" fill="none"/>
<path d="M47.5 131.2V143.8M115.6 102.5V112.5M134.9 126.2V137.5M140.5 112.5V127.5M160 110V127.5M170.2 97.5V112.5M203.1 111.2V127.5M221.9 131.2V148.8M259.4 163.8V181.2M296.9 208.8V225M303.1 195V205M328.1 236.2V242.5M334.4 236.2V242.5M347.2 206.2V225M367.6 210V227.5M391.6 200V203.8M397.9 195V203.8M410.1 187.5V205M422 162.5V178.8M446.6 170V178.8M452.9 167V178.8M465.4 149.5V165M477.9 149.5V165M484.1 162.5V177.5M490.4 173.8V185M497.2 175V183.8M516 138.8V157.5M552.9 150V167.5M577.9 167V185.5M603.5 161.2V178M609.3 161.2V178M615.4 175V191.2M640.4 225V242M646.6 244.5V261.2M727.6 265V277.5M733.9 280V286.2M746.4 300V305.5M752.8 305.5V323.8M765.8 305.5V323.8M772 327V340.5M778.2 328.8V340.5M784.2 313.8V326.2M810.1 309.5V328.8M891.4 357V371.2M897.6 342V352.5M947.6 343.8V353.8M953.9 343.8V353.8M997 408.8V415.7M1015.5 394.3V411.1M1059.9 394.3V408.2M1066.3 394.3V408.2M1072.4 394.3V405.5M1096.4 407V420.5M1109.3 402.3V420.5M1128 414.4V431.5" stroke="#2e7a48" stroke-width="1" fill="none"/>
<path d="M34 172.5C37.5 171.5 49.4 168.1 55 166.2C60.6 164.4 63.3 163.3 67.5 161.2C71.7 159.2 73.8 156.5 80 153.8C86.2 151 97.5 147 105 145C112.5 143 118.8 142.9 125 141.8C131.2 140.6 136.7 139.2 142.5 138C148.3 136.8 153.8 136 160 134.5C166.2 133 174.2 130.1 180 128.8C185.8 127.4 190 126.5 195 126.2C200 126 205 126.6 210 127C215 127.4 219.6 128 225 128.8C230.4 129.5 237.5 130.1 242.5 131.2C247.5 132.4 250.4 133.4 255 135.5C259.6 137.6 265 140.5 270 143.8C275 147 279.2 151.5 285 155C290.8 158.5 298.3 161.7 305 165C311.7 168.3 318.8 171.9 325 175C331.2 178.1 334.8 181.2 342.5 183.8C350.2 186.3 363.8 189 371 190.5C378.2 192 381.4 192.5 386 193C390.6 193.5 393.9 193.8 398.5 193.8C403.1 193.8 409.3 194 413.5 193C417.7 192 419.8 189.3 423.5 188C427.2 186.7 431.4 185.6 436 185C440.6 184.4 446 185.1 451 184.5C456 183.9 461 182.2 466 181.2C471 180.3 476.8 179.2 481 178.8C485.2 178.3 486.8 179 491 178.8C495.2 178.5 501 178.5 506 177.5C511 176.5 516 174.1 521 172.5C526 170.9 531 168.9 536 168C541 167.1 545.2 167.2 551 167C556.8 166.8 564.8 166.8 571 167C577.2 167.2 582.2 167.8 588.5 168C594.8 168.2 603.1 167.7 608.5 168C613.9 168.3 616.8 168.8 621 170C625.2 171.2 629.3 172.9 633.5 175C637.7 177.1 641.4 179.2 646 182.5C650.6 185.8 655.6 190.8 661 195C666.4 199.2 672.7 203.8 678.5 207.5C684.3 211.2 690.4 214.6 696 217C701.6 219.4 706 219.8 712 222C718 224.2 725.8 227 732 230C738.2 233 743.7 236.2 749.5 240C755.3 243.8 760.8 248.5 767 252.5C773.2 256.5 781.7 260.9 787 263.8C792.3 266.6 794.8 268 799 269.8C803.2 271.5 806.9 272.9 812.5 274.2C818.1 275.6 826.6 276.3 832.5 278C838.4 279.7 842.5 281.4 848 284.2C853.5 287.1 859.8 291.8 865.8 295.2C871.7 298.8 875.8 301.6 883.5 305.2C891.2 308.9 903.5 314.3 912 317C920.5 319.7 927.8 319.9 934.5 321.2C941.2 322.6 945.3 322.7 952 325C958.7 327.3 967.4 331.2 974.5 335C981.6 338.8 988.9 343.8 994.5 347.5C1000.1 351.2 1003.7 354.4 1008 357C1012.3 359.6 1016.2 361.1 1020.3 363.2C1024.4 365.2 1028.5 367.5 1032.6 369.3C1036.7 371.2 1040.5 372.9 1044.9 374.3C1049.3 375.6 1054.3 376.4 1059 377.3C1063.7 378.1 1068.7 379 1073.1 379.5C1077.5 380.1 1081.6 380 1085.4 380.8C1089.2 381.6 1092.1 383.2 1095.9 384.3C1099.7 385.4 1103.8 386.1 1108.2 387.3C1112.6 388.4 1117.9 390.3 1122.3 391.3C1126.7 392.4 1132.6 393.2 1134.6 393.6" fill="none" stroke="#2c2cd0" stroke-width="1.2"/>
<line x1="310" y1="185" x2="578" y2="71.5" stroke="#e81010" stroke-width="2"/>
<line x1="322" y1="260.5" x2="560" y2="163.5" stroke="#e81010" stroke-width="2"/>
<line x1="566" y1="191.7" x2="690.5" y2="191.7" stroke="#e81010" stroke-width="2"/>
<line x1="720.7" y1="264.5" x2="759" y2="267" stroke="#e81010" stroke-width="2"/>
<line x1="834.5" y1="292.5" x2="890" y2="290.5" stroke="#e81010" stroke-width="2"/>
<path d="M583.5 101.2L590.5 111L597.7 101.2L597.3 137H601L590.5 147L580.5 137H584Z" fill="#f4f400" stroke="#5a5a10" stroke-width="1"/>
<text x="39" y="471" font-family="Liberation Sans, sans-serif" font-weight="bold" font-size="10.7" fill="#7c7c7c">Commodity Channel Index</text>
<path d="M34 530.7H1362M34 617.5H1362" stroke="#000" stroke-width="2" stroke-dasharray="7 3"/>
<path d="M34 573.5H1362" stroke="#555" stroke-width="1" stroke-dasharray="2 1"/>
<polyline points="34.5,564.5 40.5,553 47,556.2 53.8,553 65.5,549.5 72,526.2 78,520 84.5,535 90.5,564.5 97,566.8 103,559.5 109.5,560.8 115.5,562 122.5,595 128.8,623.8 134.5,609.5 140.8,577 147,579.5 153,596.2 159.5,567.5 165.8,538.8 172.5,545.8 177.5,545 184.5,540.5 190.5,539.2 197,562.5 203,597 209.5,618.8 216.2,612 222,607.5 228.2,593.8 234.5,593 241.2,601.8 247.5,603.2 253.8,605.8 260,624.5 265.8,629.5 272,621.8 278.2,613 284.5,612.5 290.8,601.2 297,587.5 303.2,575 309.5,569.5 315.8,587.5 322,603.8 328.2,605.5 334.5,592.5 340.8,585.5 347,557.5 353.2,556.2 359.5,567 365.8,571.2 371,567 378,555 384.8,542.5 391,537 397.2,543.8 403,545.5 409.8,537.5 416,535.5 422.2,520 428.5,517 434.8,537.5 441,556.2 447.2,568.8 453.5,570.5 459.2,553.2 465.5,563.2 471.8,559.2 478,568.8 484.2,605 491,608 497.2,599.5 503.5,589.5 509.8,570 516,533.8 522.2,520.8 528.5,536.2 534.8,557.5 541,574.5 547.2,578.8 553.5,576.8 559.8,588.8 566,589.5 572.2,600 578.5,612.5 584.8,600.5 591,588.8 597.2,596.2 603.5,572.5 609.8,580 616,624.2 622.2,621.2 628.5,617.5 634.8,624.5 641,625 647.2,621.2 653.5,616.2 659.8,607 666,593.8 672.2,594.2 678.5,592.5 684.8,586.2 691,593 697.2,595.5 703.5,583 709.8,522 712,523.8 715.8,530 722,552.5 728.2,590 734.5,605 740.8,616.2 747,618.8 753.2,621.2 759.5,603.2 765.2,602 772,608.2 778.2,603.8 784.5,586.8 790.8,588.8 797,574.5 803.2,579.2 809.5,552.5 815.8,520 822,510 828.2,540 834.5,567.5 840.8,581.2 847,597.5 853.2,619.5 859.5,615.5 865.8,610.8 872,604.5 878.2,605.8 884.5,600.8 890.8,583.8 897,567 903.2,563.8 909.5,549.5 915.8,537 922,550.8 928.2,549.5 934.5,551.2 940.8,572.5 947,587 953.2,601.2 959.5,632.5 965.8,635.5 972,616.2 978.2,607 984.5,598.2 990.8,597.5 997,602.5 1003.2,610.5 1003,610.5 1009.2,600.8 1015.5,573.8 1021.8,581.2 1028,607.5 1034.2,605.8 1040.5,584.5 1046.8,579.5 1053,538.8 1059.2,550 1065.5,550.5 1071.8,555 1078,544.5 1084.2,539.5 1090.5,562.5 1096.8,602.5 1103,592 1109.2,612 1115.5,611.2 1121.8,608.8 1128,593.8 1134.2,577.5" fill="none" stroke="#0808d8" stroke-width="2.3" stroke-linejoin="round"/>
<line x1="128.7" y1="626.2" x2="247" y2="487" stroke="#e81010" stroke-width="2"/>
<line x1="328.2" y1="607.5" x2="471.7" y2="493" stroke="#e81010" stroke-width="2"/>
<line x1="428.5" y1="515.7" x2="528" y2="612.5" stroke="#e81010" stroke-width="2"/>
<line x1="491" y1="607.5" x2="565.5" y2="508" stroke="#e81010" stroke-width="2"/>
<line x1="641" y1="625" x2="759" y2="565.5" stroke="#e81010" stroke-width="2"/>
<line x1="753.2" y1="623" x2="890" y2="537" stroke="#e81010" stroke-width="2"/>
<line x1="859.5" y1="623" x2="965.2" y2="548" stroke="#e81010" stroke-width="2"/>
<path d="M484.5 64V646" stroke="#c81818" stroke-width="1"/>
<g font-family="Liberation Sans, sans-serif" font-weight="bold" font-size="12" text-anchor="middle" fill="#000">
<text x="91" y="655.5">08:32</text>
<text x="147" y="655.5">08:43</text>
<text x="203" y="655.5">09:29</text>
<text x="260" y="655.5">09:39</text>
<text x="316" y="655.5">09:48</text>
<text x="372" y="655.5">09:55</text>
<text x="428" y="655.5">10:10</text>
<text x="540" y="655.5">10:37</text>
<text x="597.5" y="655.5">10:50</text>
<text x="653.5" y="655.5">11:09</text>
<text x="710" y="655.5">11:30</text>
<text x="766" y="655.5">11:47</text>
<text x="822" y="655.5">11:58</text>
<text x="878" y="655.5">12:12</text>
<text x="936" y="655.5">12:31</text>
<text x="992" y="655.5">12:53</text>
<text x="1047" y="655.5">13:07</text>
<text x="1103" y="655.5">13:24</text>
</g>
<rect x="439" y="645" width="90" height="13" rx="2" fill="#e81010"/>
<text x="484" y="655.5" font-family="Liberation Sans, sans-serif" font-weight="bold" font-size="11.5" text-anchor="middle" fill="#fff">Apr, 04 10:21:28</text>
<text x="1352" y="624" font-family="Liberation Sans, sans-serif" font-weight="bold" font-size="12" text-anchor="end" fill="#000">-100.0</text>
</svg>
<!-- info box -->
<div class="abs" style="left:31px;top:64px;width:134px;height:48px;background:#fff;border:1px solid #000;font-size:8.6px;line-height:10px;white-space:nowrap">
 <div class="abs" style="left:0;top:0;width:132px;height:5px;background:#0a48d8"></div>
 <div class="abs" style="right:106px;top:8px">High</div><div class="abs" style="right:67px;top:8px">16537</div><div class="abs" style="right:35px;top:8px">Low</div><div class="abs" style="right:4px;top:8px">16527</div>
 <div class="abs" style="right:106px;top:22px">Open</div><div class="abs" style="right:67px;top:22px">16534</div><div class="abs" style="right:35px;top:22px">Close</div><div class="abs" style="right:4px;top:22px">16527</div>
 <div class="abs" style="right:103px;top:35px;color:#00009a;letter-spacing:.8px">EMA</div><div class="abs" style="right:67px;top:35px;color:#00009a">16528.0</div><div class="abs" style="right:34px;top:35px;color:#00009a;letter-spacing:.4px">CCI</div><div class="abs" style="right:3px;top:35px;color:#00009a">-108.0</div>
</div>
<div class="abs" id="dom">
 <div class="abs" id="dtitle">
  <svg class="abs" style="left:6px;top:8px" width="17" height="17" viewBox="0 0 17 17"><rect width="17" height="17" fill="#fff"/><circle cx="8.5" cy="8.5" r="7.2" fill="#fff6f6" stroke="#a83848" stroke-width="1.1"/><path d="M4.5 7.500h3.500" stroke="#f08838" stroke-width="2.400"/><path d="M8.500 7.500h4" stroke="#e23048" stroke-width="2.600"/><path d="M4 11.500c1.500-1.500 2.500 1.500 4.500 0" stroke="#a83040" stroke-width="1.600" fill="none"/><path d="M10 11h2.500" stroke="#5a9a6a" stroke-width="1"/></svg>
  <div class="abs" style="left:26px;top:9px;font:bold 13px 'Liberation Sans',sans-serif;color:#fff;white-space:nowrap;text-shadow:1px 1px 0 #0a2a90">YMM4 - Depth of Market</div>
 </div>
 <div class="abs" id="dbody">
  <div class="abs" id="dtb">
   <div class="sel" style="left:1px;top:1px;width:22px;height:21px"><svg class="abs" style="left:2px;top:2px" width="17" height="17"><ellipse cx="8" cy="12" rx="6" ry="3.5" fill="#f8e060"/><path d="M7 11l5-6" stroke="#a02020" stroke-width="1.5"/><circle cx="12.5" cy="4.5" r="2.8" fill="#d82020"/></svg></div>
   <div class="sep" style="left:26px;top:3px"></div>
   <svg class="abs" style="left:33px;top:3px" width="14" height="17"><rect x=".5" y=".5" width="12" height="15" rx="1" fill="#c4cce4" stroke="#6a7aa8"/><rect x="2" y="2" width="9" height="3" fill="#8a9ad0"/><path d="M2.5 7.5h8M2.5 10h8M2.5 12.5h8" stroke="#7a5a8a" stroke-width="1.5" stroke-dasharray="2 1"/></svg>
   <svg class="abs" style="left:54px;top:3px" width="17" height="17"><circle cx="8.5" cy="8.5" r="6" fill="none" stroke="#7a828a" stroke-width="3.5" stroke-dasharray="3 1.7"/><circle cx="8.5" cy="8.5" r="4.5" fill="#c8ccd0" stroke="#8a9298" stroke-width="2"/><circle cx="8.5" cy="8.5" r="2" fill="#e8ecf0"/></svg>
   <svg class="abs" style="left:77px;top:2px" width="19" height="19"><ellipse cx="9.5" cy="10" rx="8" ry="6.5" fill="#cdd6f6" stroke="#8a92d0"/><path d="M4 14c3-2 6-6 8-11M8 15c3-3 5-6 6-9" fill="none" stroke="#4a4ab8" stroke-width="1.5"/></svg>
   <div class="sep" style="left:101px;top:3px"></div>
   <svg class="abs" style="left:108px;top:2px" width="16" height="19"><rect x="2.5" y="4.5" width="9" height="12" fill="#fff" stroke="#666"/><text x="4.5" y="14" font-family="Liberation Sans,sans-serif" font-size="9" font-weight="bold" fill="#c02020">2</text><text x="1" y="7" font-family="Liberation Sans,sans-serif" font-size="7" font-weight="bold" fill="#000">1</text><text x="10" y="8" font-family="Liberation Sans,sans-serif" font-size="9" font-weight="bold" fill="#2a3a9a">?</text></svg>
   <svg class="abs" style="left:131px;top:2px" width="16" height="19"><path d="M3 16l5-14 6 14z" fill="#d83030"/><path d="M5 9h7M4 13h9" stroke="#fff" stroke-width="1.5"/><circle cx="3" cy="15" r="2" fill="#f0f0f0"/><circle cx="12" cy="16" r="2" fill="#f0f0f0"/></svg>
   <svg class="abs" style="left:153px;top:3px" width="17" height="17"><circle cx="8.5" cy="8.5" r="7" fill="#3a8ab0" stroke="#2a5a7a" stroke-width="1.5"/><path d="M8.5 4v4.500l3 2" stroke="#fff" stroke-width="1.5" fill="none"/></svg>
   <svg class="abs" style="left:177px;top:5px" width="12" height="14"><path d="M0 0h10L6 6v6H4V6z" fill="#8a8a8a"/></svg>
  </div>
  <div class="abs" style="left:6px;top:34px">Qty:</div>
  <div class="inp" style="left:32px;top:29px;width:51px;height:20px;padding:3px 17px 0 0;font-size:11px">25</div>
  <div class="abs" style="left:68px;top:31px;width:13px;height:16px;background:#c6d6f8;border-radius:2px"><svg width="13" height="16"><path d="M3.5 6L6.5 3l3 3M3.5 10l3 3 3-3" fill="none" stroke="#4a62a8" stroke-width="1.6"/></svg></div>
  <div class="abs" style="left:119px;top:34px;white-space:nowrap">Total P/L:</div>
  <div class="inp" style="left:173px;top:29px;width:30px;height:20px"></div>
  <div class="abs" style="left:6px;top:63px">Pos:</div>
  <div class="inp" style="left:34px;top:58px;width:71px;height:20px;padding:3px 3px 0 0;font-size:11px">0</div>
  <div class="btn" style="left:113px;top:58px;width:90px;height:21px;padding-top:4px;text-align:left;padding-left:6px">Exit at Mkt &amp; Cxl</div>
  <div class="btn" style="left:5px;top:87px;width:87px;height:21px;padding-top:4px">Cancel Bids</div>
  <div class="btn" style="left:101px;top:87px;width:100px;height:21px;padding:4px 0 0 21px;text-align:left">Cancel All</div>
  <div class="abs" style="left:3px;top:115px;width:190px;height:357px;background:#bcbcb8"></div>
  <div class="abs" style="left:4px;top:116px;width:84px;height:22px;background:#0a640a;color:#fff;text-align:center;font-size:11.5px;padding-top:5px">Bid</div>
  <div class="abs" style="left:88px;top:116px;width:100px;height:22px;background:#ece9d8"></div>
  <div class="abs" style="left:142px;top:125px;width:0;height:0;border-left:5px solid transparent;border-right:5px solid transparent;border-bottom:5px solid #000"></div>
  <div class="abs" style="left:4px;top:139px;width:44px;height:14px;background:#fff"></div>
  <div class="abs" style="left:48px;top:138px;width:40px;height:15px;background:#0a640a;border-top:1px solid #8cc88c;color:#fff;font-weight:bold;font-size:11.5px;text-align:center;line-height:15px"></div>
  <div class="abs" style="left:88px;top:139px;width:37px;height:14px;background:#d2d2d2"></div>
  <div class="abs" style="left:126px;top:139px;width:70px;height:14px;background:#d2d2d2;color:#000;font-weight:normal;font-size:11px;line-height:15px;padding-left:27px">16432</div>
  <div class="abs" style="left:4px;top:154px;width:44px;height:14px;background:#fff"></div>
  <div class="abs" style="left:48px;top:153px;width:40px;height:15px;background:#0a640a;border-top:1px solid #8cc88c;color:#fff;font-weight:bold;font-size:11.5px;text-align:center;line-height:15px"></div>
  <div class="abs" style="left:88px;top:154px;width:37px;height:14px;background:#d2d2d2"></div>
  <div class="abs" style="left:126px;top:154px;width:70px;height:14px;background:#d2d2d2;color:#000;font-weight:normal;font-size:11px;line-height:15px;padding-left:27px">16431</div>
  <div class="abs" style="left:4px;top:169px;width:44px;height:14px;background:#fff"></div>
  <div class="abs" style="left:48px;top:168px;width:40px;height:15px;background:#0a640a;border-top:1px solid #8cc88c;color:#fff;font-weight:bold;font-size:11.5px;text-align:center;line-height:15px"></div>
  <div class="abs" style="left:88px;top:169px;width:37px;height:14px;background:#d2d2d2"></div>
  <div class="abs" style="left:126px;top:169px;width:70px;height:14px;background:#d2d2d2;color:#000;font-weight:normal;font-size:11px;line-height:15px;padding-left:27px">16430</div>
  <div class="abs" style="left:4px;top:184px;width:44px;height:14px;background:#fff"></div>
  <div class="abs" style="left:48px;top:183px;width:40px;height:15px;background:#0a640a;border-top:1px solid #8cc88c;color:#fff;font-weight:bold;font-size:11.5px;text-align:center;line-height:15px"></div>
  <div class="abs" style="left:88px;top:184px;width:37px;height:14px;background:#d2d2d2"></div>
  <div class="abs" style="left:126px;top:184px;width:70px;height:14px;background:#d2d2d2;color:#000;font-weight:normal;font-size:11px;line-height:15px;padding-left:27px">16429</div>
  <div class="abs" style="left:4px;top:199px;width:44px;height:14px;background:#fff"></div>
  <div class="abs" style="left:48px;top:198px;width:40px;height:15px;background:#0a640a;border-top:1px solid #8cc88c;color:#fff;font-weight:bold;font-size:11.5px;text-align:center;line-height:15px"></div>
  <div class="abs" style="left:88px;top:199px;width:37px;height:14px;background:#d2d2d2"></div>
  <div class="abs" style="left:126px;top:199px;width:70px;height:14px;background:#d2d2d2;color:#000;font-weight:normal;font-size:11px;line-height:15px;padding-left:27px">16428</div>
  <div class="abs" style="left:4px;top:214px;width:44px;height:14px;background:#fff"></div>
  <div class="abs" style="left:48px;top:213px;width:40px;height:15px;background:#0a640a;border-top:1px solid #8cc88c;color:#fff;font-weight:bold;font-size:11.5px;text-align:center;line-height:15px"></div>
  <div class="abs" style="left:88px;top:214px;width:37px;height:14px;background:#d2d2d2"></div>
  <div class="abs" style="left:126px;top:214px;width:70px;height:14px;background:#d2d2d2;color:#000;font-weight:normal;font-size:11px;line-height:15px;padding-left:27px">16427</div>
  <div class="abs" style="left:4px;top:229px;width:44px;height:14px;background:#fff"></div>
  <div class="abs" style="left:48px;top:228px;width:40px;height:15px;background:#0a640a;border-top:1px solid #8cc88c;color:#fff;font-weight:bold;font-size:11.5px;text-align:center;line-height:15px"></div>
  <div class="abs" style="left:88px;top:229px;width:37px;height:14px;background:#d2d2d2"></div>
  <div class="abs" style="left:126px;top:229px;width:70px;height:14px;background:#d2d2d2;color:#000;font-weight:normal;font-size:11px;line-height:15px;padding-left:27px">16426</div>
  <div class="abs" style="left:4px;top:244px;width:44px;height:14px;background:#fff"></div>
  <div class="abs" style="left:48px;top:243px;width:40px;height:15px;background:#0a640a;border-top:1px solid #8cc88c;color:#fff;font-weight:bold;font-size:11.5px;text-align:center;line-height:15px"></div>
  <div class="abs" style="left:88px;top:244px;width:37px;height:14px;background:#d2d2d2"></div>
  <div class="abs" style="left:126px;top:244px;width:70px;height:14px;background:#d2d2d2;color:#000;font-weight:normal;font-size:11px;line-height:15px;padding-left:27px">16425</div>
  <div class="abs" style="left:4px;top:259px;width:44px;height:14px;background:#fff"></div>
  <div class="abs" style="left:48px;top:258px;width:40px;height:15px;background:#0a640a;border-top:1px solid #8cc88c;color:#fff;font-weight:bold;font-size:11.5px;text-align:center;line-height:15px"></div>
  <div class="abs" style="left:88px;top:259px;width:37px;height:14px;background:#d2d2d2"></div>
  <div class="abs" style="left:126px;top:259px;width:70px;height:14px;background:#d2d2d2;color:#000;font-weight:normal;font-size:11px;line-height:15px;padding-left:27px">16424</div>
  <div class="abs" style="left:4px;top:274px;width:44px;height:14px;background:#fff"></div>
  <div class="abs" style="left:48px;top:273px;width:40px;height:15px;background:#0a640a;border-top:1px solid #8cc88c;color:#fff;font-weight:bold;font-size:11.5px;text-align:center;line-height:15px"></div>
  <div class="abs" style="left:88px;top:274px;width:37px;height:14px;background:#d2d2d2"></div>
  <div class="abs" style="left:126px;top:274px;width:70px;height:14px;background:#d2d2d2;color:#000;font-weight:normal;font-size:11px;line-height:15px;padding-left:27px">16423</div>
  <div class="abs" style="left:4px;top:289px;width:44px;height:14px;background:#fff"></div>
  <div class="abs" style="left:48px;top:288px;width:40px;height:15px;background:#0a640a;border-top:1px solid #8cc88c;color:#fff;font-weight:bold;font-size:11.5px;text-align:center;line-height:15px"></div>
  <div class="abs" style="left:88px;top:289px;width:37px;height:14px;background:#d2d2d2"></div>
  <div class="abs" style="left:126px;top:289px;width:70px;height:14px;background:#d2d2d2;color:#000;font-weight:normal;font-size:11px;line-height:15px;padding-left:27px">16422</div>
  <div class="abs" style="left:4px;top:304px;width:44px;height:14px;background:#fff"></div>
  <div class="abs" style="left:48px;top:303px;width:40px;height:15px;background:#0a640a;border-top:1px solid #8cc88c;color:#fff;font-weight:bold;font-size:11.5px;text-align:center;line-height:15px"></div>
  <div class="abs" style="left:88px;top:304px;width:37px;height:14px;background:#d2d2d2"></div>
  <div class="abs" style="left:126px;top:304px;width:70px;height:14px;background:#d2d2d2;color:#000;font-weight:normal;font-size:11px;line-height:15px;padding-left:27px">16421</div>
  <div class="abs" style="left:4px;top:319px;width:44px;height:14px;background:#fff"></div>
  <div class="abs" style="left:48px;top:318px;width:40px;height:15px;background:#0a640a;border-top:1px solid #8cc88c;color:#fff;font-weight:bold;font-size:11.5px;text-align:center;line-height:15px"></div>
  <div class="abs" style="left:88px;top:319px;width:37px;height:14px;background:#d2d2d2"></div>
  <div class="abs" style="left:126px;top:319px;width:70px;height:14px;background:#d2d2d2;color:#e01010;font-weight:bold;font-size:12.5px;line-height:15px;padding-left:25px">16420</div>
  <div class="abs" style="left:88px;top:318px;width:38px;height:15px;background:#d8d8d8;border:1px solid #000;text-align:center;font-size:11px;line-height:13px">2</div>
  <div class="abs" style="left:4px;top:334px;width:44px;height:14px;background:#fff"></div>
  <div class="abs" style="left:48px;top:333px;width:40px;height:15px;background:#0a640a;border-top:1px solid #8cc88c;color:#fff;font-weight:bold;font-size:11.5px;text-align:center;line-height:15px">13</div>
  <div class="abs" style="left:88px;top:334px;width:37px;height:14px;background:#d2d2d2"></div>
  <div class="abs" style="left:126px;top:334px;width:70px;height:14px;background:#d2d2d2;color:#208a20;font-weight:normal;font-size:11px;line-height:15px;padding-left:27px">16419</div>
  <div class="abs" style="left:4px;top:349px;width:44px;height:14px;background:#fff"></div>
  <div class="abs" style="left:48px;top:348px;width:40px;height:15px;background:#0a640a;border-top:1px solid #8cc88c;color:#fff;font-weight:bold;font-size:11.5px;text-align:center;line-height:15px">42</div>
  <div class="abs" style="left:88px;top:349px;width:37px;height:14px;background:#d2d2d2"></div>
  <div class="abs" style="left:126px;top:349px;width:70px;height:14px;background:#d2d2d2;color:#000;font-weight:normal;font-size:11px;line-height:15px;padding-left:27px">16418</div>
  <div class="abs" style="left:4px;top:364px;width:44px;height:14px;background:#fff"></div>
  <div class="abs" style="left:48px;top:363px;width:40px;height:15px;background:#0a640a;border-top:1px solid #8cc88c;color:#fff;font-weight:bold;font-size:11.5px;text-align:center;line-height:15px">56</div>
  <div class="abs" style="left:88px;top:364px;width:37px;height:14px;background:#d2d2d2"></div>
  <div class="abs" style="left:126px;top:364px;width:70px;height:14px;background:#d2d2d2;color:#000;font-weight:normal;font-size:11px;line-height:15px;padding-left:27px">16417</div>
  <div class="abs" style="left:4px;top:379px;width:44px;height:14px;background:#fff"></div>
  <div class="abs" style="left:48px;top:378px;width:40px;height:15px;background:#0a640a;border-top:1px solid #8cc88c;color:#fff;font-weight:bold;font-size:11.5px;text-align:center;line-height:15px">62</div>
  <div class="abs" style="left:88px;top:379px;width:37px;height:14px;background:#d2d2d2"></div>
  <div class="abs" style="left:126px;top:379px;width:70px;height:14px;background:#d2d2d2;color:#000;font-weight:normal;font-size:11px;line-height:15px;padding-left:27px">16416</div>
  <div class="abs" style="left:4px;top:394px;width:44px;height:14px;background:#fff"></div>
  <div class="abs" style="left:48px;top:393px;width:40px;height:15px;background:#0a640a;border-top:1px solid #8cc88c;color:#fff;font-weight:bold;font-size:11.5px;text-align:center;line-height:15px">71</div>
  <div class="abs" style="left:88px;top:394px;width:37px;height:14px;background:#d2d2d2"></div>
  <div class="abs" style="left:126px;top:394px;width:70px;height:14px;background:#d2d2d2;color:#000;font-weight:normal;font-size:11px;line-height:15px;padding-left:27px">16415</div>
  <div class="abs" style="left:4px;top:409px;width:44px;height:14px;background:#fff"></div>
  <div class="abs" style="left:48px;top:408px;width:40px;height:15px;background:#0a640a;border-top:1px solid #8cc88c;color:#fff;font-weight:bold;font-size:11.5px;text-align:center;line-height:15px">56</div>
  <div class="abs" style="left:88px;top:409px;width:37px;height:14px;background:#d2d2d2"></div>
  <div class="abs" style="left:126px;top:409px;width:70px;height:14px;background:#d2d2d2;color:#000;font-weight:normal;font-size:11px;line-height:15px;padding-left:27px">16414</div>
  <div class="abs" style="left:4px;top:424px;width:44px;height:14px;background:#fff"></div>
  <div class="abs" style="left:48px;top:423px;width:40px;height:15px;background:#0a640a;border-top:1px solid #8cc88c;color:#fff;font-weight:bold;font-size:11.5px;text-align:center;line-height:15px">61</div>
  <div class="abs" style="left:88px;top:424px;width:37px;height:14px;background:#d2d2d2"></div>
  <div class="abs" style="left:126px;top:424px;width:70px;height:14px;background:#d2d2d2;color:#000;font-weight:normal;font-size:11px;line-height:15px;padding-left:27px">16413</div>
  <div class="abs" style="left:4px;top:439px;width:44px;height:14px;background:#fff"></div>
  <div class="abs" style="left:48px;top:438px;width:40px;height:15px;background:#0a640a;border-top:1px solid #8cc88c;color:#fff;font-weight:bold;font-size:11.5px;text-align:center;line-height:15px">60</div>
  <div class="abs" style="left:88px;top:439px;width:37px;height:14px;background:#d2d2d2"></div>
  <div class="abs" style="left:126px;top:439px;width:70px;height:14px;background:#d2d2d2;color:#000;font-weight:normal;font-size:11px;line-height:15px;padding-left:27px">16412</div>
  <div class="abs" style="left:4px;top:453px;width:84px;height:18px;background:#0a640a"></div>
  <div class="abs" style="left:88px;top:453px;width:100px;height:18px;background:#ece9d8"></div>
  <div class="abs" style="left:142px;top:459px;width:0;height:0;border-left:5px solid transparent;border-right:5px solid transparent;border-top:5px solid #000"></div>
  <div class="abs" style="left:0;top:471px;width:190px;height:62px;background:#ece9d8"></div>
  <div class="btn2" style="left:4px;top:480px;width:89px;height:21px;padding-top:4px;font-size:11px">Buy Mkt</div>
  <div class="btn2" style="left:101px;top:480px;width:100px;height:21px;padding:4px 0 0 20px;text-align:left;font-size:11px">Go to Last</div>
  <div class="abs" style="left:0;top:507px;width:190px;height:1px;background:#c5c2b2;box-shadow:0 1px 0 #fff"></div>
  <div class="dot" style="left:3px;top:513px"></div>
  <div class="abs" style="left:19px;top:514px;font-size:11px">Connected</div>
 </div>
 <div class="abs" style="left:4px;top:558px;width:186px;height:2px;background:linear-gradient(180deg,#c8dcf8,#4a7ae8)"></div>
</div>
<div class="abs" id="task">
 <div class="abs" id="start"><svg class="abs" style="left:10px;top:5px" width="22" height="20" viewBox="0 0 20 18"><path d="M2 3c2-1 4-1 6 0l-1.500 5c-2-1-4-1-6 0z" fill="#e85a28"/><path d="M9.500 3.500c2 1 4 1 6 0L14 8.500c-2 1-4 1-6 0z" fill="#7ac040"/><path d="M.5 9.500c2-1 4-1 6 0L5 14.500c-2-1-4-1-6 0z" fill="#3a80e8"/><path d="M8 10c2 1 4 1 6 0l-1.500 5c-2 1-4 1-6 0z" fill="#f4c428"/></svg><span>start</span></div>
 <div class="tbtn" style="left:107px;width:158px"><svg class="abs" style="left:9px;top:4px" width="16" height="16" viewBox="0 0 17 17"><rect width="17" height="17" fill="#fff"/><circle cx="8.5" cy="8.5" r="7.2" fill="#fff6f6" stroke="#a83848" stroke-width="1.1"/><path d="M4.5 7.500h3.500" stroke="#f08838" stroke-width="2.400"/><path d="M8.500 7.500h4" stroke="#e23048" stroke-width="2.600"/><path d="M4 11.500c1.500-1.500 2.500 1.500 4.500 0" stroke="#a83040" stroke-width="1.600" fill="none"/><path d="M10 11h2.500" stroke="#5a9a6a" stroke-width="1"/></svg><span>Global Zen Trader 3.5</span></div>
 <div class="tbtn" style="left:267px;width:158px"><svg class="abs" style="left:9px;top:4px" width="16" height="16" viewBox="0 0 17 17"><rect width="17" height="17" fill="#fff"/><circle cx="8.5" cy="8.5" r="7.2" fill="#fff6f6" stroke="#a83848" stroke-width="1.1"/><path d="M4.5 7.500h3.500" stroke="#f08838" stroke-width="2.400"/><path d="M8.500 7.500h4" stroke="#e23048" stroke-width="2.600"/><path d="M4 11.500c1.500-1.500 2.500 1.500 4.500 0" stroke="#a83040" stroke-width="1.600" fill="none"/><path d="M10 11h2.500" stroke="#5a9a6a" stroke-width="1"/></svg><span>YMM4: 10 ticks (r) (cc...</span></div>
 <div class="tbtn act" style="left:427px;width:158px"><svg class="abs" style="left:9px;top:4px" width="16" height="16" viewBox="0 0 17 17"><rect width="17" height="17" fill="#fff"/><circle cx="8.5" cy="8.5" r="7.2" fill="#fff6f6" stroke="#a83848" stroke-width="1.1"/><path d="M4.5 7.500h3.500" stroke="#f08838" stroke-width="2.400"/><path d="M8.500 7.500h4" stroke="#e23048" stroke-width="2.600"/><path d="M4 11.500c1.500-1.500 2.500 1.500 4.500 0" stroke="#a83040" stroke-width="1.600" fill="none"/><path d="M10 11h2.500" stroke="#5a9a6a" stroke-width="1"/></svg><span>YMM4 - Depth of Market</span></div>
 <svg class="abs" style="left:1144px;top:7px" width="50" height="18"><path d="M3 15l8-9" stroke="#ccd" stroke-width="2.500"/><circle cx="12.500" cy="4.500" r="3" fill="#334" stroke="#ccd"/><path d="M3 15c-1 2 1 3 2 2" stroke="#ccd" fill="none"/><rect x="24" y="3" width="13" height="10" fill="#fff" stroke="#222"/><path d="M26 6h6M26 9h4" stroke="#222"/><path d="M33 11l4-5" stroke="#e8c020" stroke-width="2"/><path d="M45 3v11" stroke="#112"/></svg>
 <div class="abs" id="tray">
  <div class="abs" style="left:11px;top:7px;width:16px;height:16px;background:#f08028;border:1px solid #c86818"></div>
  <svg class="abs" style="left:13px;top:9px" width="12" height="12"><path d="M1 10h10M2 7h8M6 6c-2-2 2-3 0-5" stroke="#fff" stroke-width="1.4" fill="none"/></svg>
  <div class="abs" style="left:30px;top:8px;width:15px;height:15px;border-radius:50%;background:linear-gradient(180deg,#48c048 0,#38b038 50%,#f4f4f4 52%,#e0e0e0 100%);border:1px solid #d8ecd8"></div><div class="abs" style="left:31px;top:14px;width:6px;height:4px;background:#d03030;border-radius:2px 0 0 2px"></div>
  <div class="abs" style="left:47px;top:7px;width:16px;height:16px;border-radius:50%;background:#fff;border:4px solid #f4a428"></div>
  <div class="abs" style="left:66px;top:6px;width:11px;height:12px;border-radius:50%;background:radial-gradient(circle at 40% 40%,#c8ccd4,#60646c);border:1px solid #50545c"></div><div class="abs" style="left:73px;top:19px;width:8px;height:2px;background:#80a0e8;transform:rotate(-50deg)"></div>
  <svg class="abs" style="left:83px;top:6px" width="16" height="18"><path d="M3 12l5-4 6 5-4 4z" fill="#788898" stroke="#b8c4d0"/><path d="M2 5l6-3v2l5 2-2 3-4-2v2z" fill="#38b838"/></svg>
  <div class="abs" style="left:108px;top:8px;color:#fff;font-size:11px;white-space:nowrap">1:39 PM</div>
 </div>
</div>
</body></html>
